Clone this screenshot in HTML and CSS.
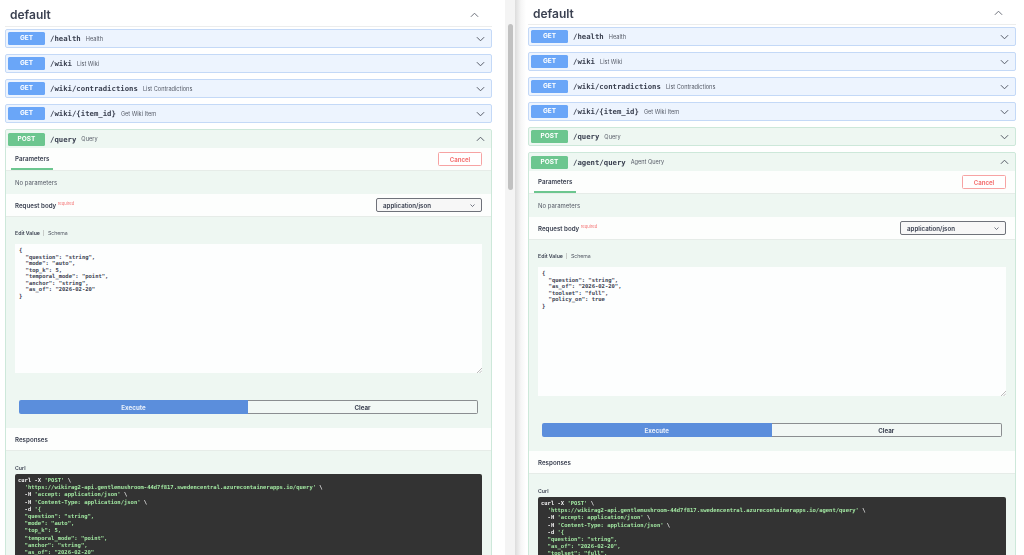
FILE: index.html
```html
<!DOCTYPE html>
<html lang="en">
<head>
  <meta charset="UTF-8">
  <title>Swagger UI</title>
  <link rel="stylesheet" href="styles.css">
</head>
<body>
  <svg class="icon-defs" width="0" height="0">
    <symbol id="chev-down" viewBox="0 0 10 6"><polyline points="1,1 5,5 9,1"/></symbol>
    <symbol id="chev-up" viewBox="0 0 10 6"><polyline points="1,5 5,1 9,5"/></symbol>
  </svg>

  <div class="screen">
    <!-- left window -->
    <div class="pane pane-left">
      <div class="tag">
        <span>default</span>
        <svg class="chev tag-chev"><use href="#chev-up"/></svg>
      </div>

      <div class="op get">
        <span class="method">GET</span><span class="path">/health</span><span class="summary">Health</span>
        <svg class="chev"><use href="#chev-down"/></svg>
      </div>
      <div class="op get">
        <span class="method">GET</span><span class="path">/wiki</span><span class="summary">List Wiki</span>
        <svg class="chev"><use href="#chev-down"/></svg>
      </div>
      <div class="op get">
        <span class="method">GET</span><span class="path">/wiki/contradictions</span><span class="summary">List Contradictions</span>
        <svg class="chev"><use href="#chev-down"/></svg>
      </div>
      <div class="op get">
        <span class="method">GET</span><span class="path">/wiki/{item_id}</span><span class="summary">Get Wiki Item</span>
        <svg class="chev"><use href="#chev-down"/></svg>
      </div>

      <div class="op-open">
        <div class="op post">
          <span class="method">POST</span><span class="path">/query</span><span class="summary">Query</span>
          <svg class="chev"><use href="#chev-up"/></svg>
        </div>
        <div class="bar bar-tabs">
          <span class="tab">Parameters</span>
          <button class="btn-cancel">Cancel</button>
        </div>
        <div class="no-params">No parameters</div>
        <div class="bar">
          <span class="bar-title">Request body <sup class="required">required</sup></span>
          <div class="select">application/json<svg class="select-chev"><use href="#chev-down"/></svg></div>
        </div>
        <div class="edit">
          <div class="edit-tabs"><b>Edit Value</b><i></i>Schema</div>
          <div class="textarea"><pre>{
  "question": "string",
  "mode": "auto",
  "top_k": 5,
  "temporal_mode": "point",
  "anchor": "string",
  "as_of": "2026-02-20"
}</pre>
            <svg class="grip" viewBox="0 0 6 6"><path d="M1 6 6 1M3.5 6 6 3.5"/></svg>
          </div>
          <div class="actions">
            <button class="btn-execute">Execute</button>
            <button class="btn-clear">Clear</button>
          </div>
        </div>
        <div class="bar"><span class="bar-title">Responses</span></div>
        <div class="curl-wrap">
          <div class="curl-label">Curl</div>
          <pre class="curl">curl -X <em>'POST'</em> \
  <em>'https://wikirag2-api.gentlemushroom-44d7f817.swedencentral.azurecontainerapps.io/query'</em> \
  -H <em>'accept: application/json'</em> \
  -H <em>'Content-Type: application/json'</em> \
  -d <em>'{
  "question": "string",
  "mode": "auto",
  "top_k": 5,
  "temporal_mode": "point",
  "anchor": "string",
  "as_of": "2026-02-20"
}'</em></pre>
        </div>
      </div>
    </div>

    <div class="gutter"><div class="thumb"></div></div>

    <!-- right window -->
    <div class="pane pane-right">
      <div class="tag">
        <span>default</span>
        <svg class="chev tag-chev"><use href="#chev-up"/></svg>
      </div>

      <div class="op get">
        <span class="method">GET</span><span class="path">/health</span><span class="summary">Health</span>
        <svg class="chev"><use href="#chev-down"/></svg>
      </div>
      <div class="op get">
        <span class="method">GET</span><span class="path">/wiki</span><span class="summary">List Wiki</span>
        <svg class="chev"><use href="#chev-down"/></svg>
      </div>
      <div class="op get">
        <span class="method">GET</span><span class="path">/wiki/contradictions</span><span class="summary">List Contradictions</span>
        <svg class="chev"><use href="#chev-down"/></svg>
      </div>
      <div class="op get">
        <span class="method">GET</span><span class="path">/wiki/{item_id}</span><span class="summary">Get Wiki Item</span>
        <svg class="chev"><use href="#chev-down"/></svg>
      </div>
      <div class="op post closed">
        <span class="method">POST</span><span class="path">/query</span><span class="summary">Query</span>
        <svg class="chev"><use href="#chev-down"/></svg>
      </div>

      <div class="op-open">
        <div class="op post">
          <span class="method">POST</span><span class="path">/agent/query</span><span class="summary">Agent Query</span>
          <svg class="chev"><use href="#chev-up"/></svg>
        </div>
        <div class="bar bar-tabs">
          <span class="tab">Parameters</span>
          <button class="btn-cancel">Cancel</button>
        </div>
        <div class="no-params">No parameters</div>
        <div class="bar">
          <span class="bar-title">Request body <sup class="required">required</sup></span>
          <div class="select">application/json<svg class="select-chev"><use href="#chev-down"/></svg></div>
        </div>
        <div class="edit">
          <div class="edit-tabs"><b>Edit Value</b><i></i>Schema</div>
          <div class="textarea"><pre>{
  "question": "string",
  "as_of": "2026-02-20",
  "toolset": "full",
  "policy_on": true
}</pre>
            <svg class="grip" viewBox="0 0 6 6"><path d="M1 6 6 1M3.5 6 6 3.5"/></svg>
          </div>
          <div class="actions">
            <button class="btn-execute">Execute</button>
            <button class="btn-clear">Clear</button>
          </div>
        </div>
        <div class="bar"><span class="bar-title">Responses</span></div>
        <div class="curl-wrap">
          <div class="curl-label">Curl</div>
          <pre class="curl">curl -X <em>'POST'</em> \
  <em>'https://wikirag2-api.gentlemushroom-44d7f817.swedencentral.azurecontainerapps.io/agent/query'</em> \
  -H <em>'accept: application/json'</em> \
  -H <em>'Content-Type: application/json'</em> \
  -d <em>'{
  "question": "string",
  "as_of": "2026-02-20",
  "toolset": "full",
  "policy_on": true
}'</em></pre>
        </div>
      </div>
    </div>
  </div>
</body>
</html>
```

FILE: styles.css
```css
html, body {
  margin: 0;
  height: 100%;
  overflow: hidden;
  background-color: #fff;
}

body {
  font-family: "Inter", "Liberation Sans", sans-serif;
  color: #3b4151;
}

.icon-defs {
  position: absolute;
}

/* the page was shot at half size, so everything is soft */
.screen {
  display: flex;
  height: 555px;
  filter: blur(0.35px);
}

.pane {
  height: 555px;
  overflow: hidden;
  box-sizing: border-box;
}

.pane-left {
  width: 505px;
  padding: 0 13px 0 5px;
}

.pane-right {
  width: 509px;
  padding: 0 8px 0 13px;
  background: linear-gradient(to right, #dcdcdc 0, #f6f6f6 6px, #fff 11px);
}

.gutter {
  width: 10px;
  padding: 24px 2px 0 3px;
  box-sizing: border-box;
  background-color: #f4f4f4;
}

.thumb {
  height: 166px;
  border-radius: 3px;
  background-color: #c1c1c1;
}

/* tag heading */
.tag {
  display: flex;
  align-items: center;
  justify-content: space-between;
  height: 27px;
  margin-bottom: 2px;
  padding: 3px 13px 0 5px;
  box-sizing: border-box;
  border-bottom: 1px solid #eceded;
  font-size: 12px;
  font-weight: 600;
}

.pane-right .tag {
  height: 25px;
  padding-top: 2px;
}

.chev {
  width: 9px;
  height: 6px;
  margin-left: auto;
  fill: none;
  stroke: #555a66;
  stroke-width: 1.1;
}

.tag-chev {
  margin-left: 0;
  stroke: #6b6f79;
}

/* operation rows */
.op {
  display: flex;
  align-items: center;
  height: 19px;
  margin-bottom: 6px;
  padding: 0 6px 0 2px;
  box-sizing: border-box;
  border: 1px solid #c4d9f7;
  border-radius: 2px;
  background-color: #edf4fe;
}

.op.post {
  border-color: #cde8da;
  background-color: #eef7f2;
}

.method {
  width: 37px;
  height: 13px;
  line-height: 13px;
  border-radius: 1.5px;
  background-color: #6aa6f8;
  color: #fff;
  font-size: 6.5px;
  font-weight: 700;
  text-align: center;
}

.post .method {
  background-color: #6cc68f;
}

.path {
  margin: 0 5px;
  font-family: "DejaVu Sans Mono", monospace;
  font-size: 7.3px;
  font-weight: 700;
}

.summary {
  font-size: 5.6px;
  color: #555a66;
}

/* expanded operation */
.op-open {
  border: 1px solid #cde8da;
  border-radius: 2px;
  background-color: #eef7f2;
}

.op-open .op {
  height: 18px;
  margin: 0;
  border: 0;
}

.bar {
  display: flex;
  align-items: center;
  justify-content: space-between;
  height: 23px;
  padding: 0 9px;
  box-sizing: border-box;
  background-color: #fdfefd;
  border-bottom: 1px solid #e6ece8;
}

.bar-tabs {
  align-items: stretch;
}

.tab {
  display: flex;
  align-items: center;
  padding: 0 4px;
  margin-left: -4px;
  font-size: 6.2px;
  font-weight: 600;
  border-bottom: 2px solid #6cc68f;
}

.btn-cancel {
  width: 44px;
  height: 14px;
  margin-top: 4px;
  padding: 0;
  border: 1px solid #f7a3a3;
  border-radius: 1.5px;
  background-color: #fff;
  color: #f47373;
  font-family: inherit;
  font-size: 6px;
  font-weight: 700;
}

.no-params {
  height: 23px;
  line-height: 23px;
  padding: 0 9px;
  font-size: 6px;
  color: #555a66;
}

.bar-title {
  font-size: 6.2px;
  font-weight: 600;
}

.required {
  font-size: 4.2px;
  font-weight: 400;
  color: #f47373;
  vertical-align: 3px;
  line-height: 0;
}

.select {
  display: flex;
  align-items: center;
  justify-content: space-between;
  width: 106px;
  height: 14px;
  padding: 0 6px;
  box-sizing: border-box;
  border: 1px solid #6f727a;
  border-radius: 2px;
  background-color: #f7f7f7;
  font-size: 6.2px;
  font-weight: 600;
}

.select-chev {
  width: 5px;
  height: 3px;
  fill: none;
  stroke: #3b4151;
  stroke-width: 1.4;
}

.edit {
  padding: 0 9px 14px;
}

.edit-tabs {
  display: flex;
  align-items: center;
  height: 27px;
  padding-top: 5px;
  box-sizing: border-box;
  font-size: 5.2px;
  color: #555a66;
}

.edit-tabs b {
  font-weight: 600;
  color: #3b4151;
}

.edit-tabs i {
  width: 1px;
  height: 6px;
  margin: 0 4px 0 3px;
  background-color: #c8ccc9;
}

.textarea {
  position: relative;
  height: 129px;
  padding: 3px 4px;
  box-sizing: border-box;
  background-color: #fdfefe;
}

.textarea pre {
  margin: 0;
  font-family: "DejaVu Sans Mono", monospace;
  font-size: 5.5px;
  font-weight: 700;
  line-height: 6.55px;
  color: #3b4151;
}

.grip {
  position: absolute;
  right: 0;
  bottom: 0;
  width: 6px;
  height: 6px;
  fill: none;
  stroke: #777;
  stroke-width: 0.5;
}

.actions {
  display: flex;
  margin: 27px 4px 0;
}

.actions button {
  flex: 1;
  height: 14px;
  padding: 0;
  font-family: inherit;
  font-size: 6.2px;
  font-weight: 700;
}

.btn-execute {
  border: 0;
  border-radius: 2px 0 0 2px;
  background-color: #5b8edc;
  color: #e9f0fb;
}

.btn-clear {
  border: 1px solid #8b8e91;
  border-left: 0;
  border-radius: 0 2px 2px 0;
  background-color: #f2f8f5;
  color: #3b4151;
}

.curl-wrap {
  padding: 0 9px;
}

.curl-label {
  height: 23px;
  padding-top: 14px;
  box-sizing: border-box;
  font-size: 5.2px;
  font-weight: 600;
}

.curl {
  margin: 0;
  height: 120px;
  padding: 3px;
  box-sizing: border-box;
  border-radius: 2px;
  background-color: #333;
  color: #f3f3f3;
  font-family: "DejaVu Sans Mono", monospace;
  font-size: 5.5px;
  font-weight: 700;
  line-height: 7.2px;
}

.curl em {
  font-style: normal;
  color: #a2e8a2;
}
```
